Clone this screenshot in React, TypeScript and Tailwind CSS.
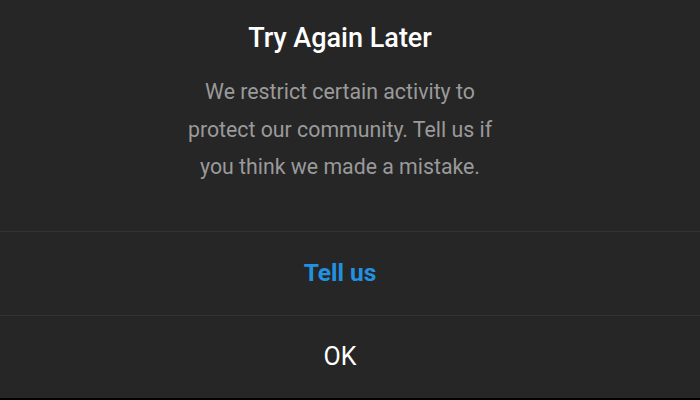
import React from 'react';

const App: React.FC = () => {
  return (
    <div className="w-[700px] h-[400px] bg-[#262626] flex flex-col overflow-hidden font-['Roboto',sans-serif]">
      <div className="h-[231px] flex flex-col items-center pt-[20px] pr-[20px]">
        <h1 className="text-[27px] leading-[36px] font-medium text-white">Try Again Later</h1>
        <p className="mt-[17px] text-[21.3px] leading-[37.5px] text-[#9a9a9a] text-center w-[330px]">
          We restrict certain activity to protect our community. Tell us if you think we made a mistake.
        </p>
      </div>
      <button className="h-[84px] pr-[20px] border-t border-[#333333] flex items-center justify-center text-[24.5px] font-bold text-[#2391e0]">
        Tell us
      </button>
      <button className="h-[83px] pr-[20px] border-t border-[#333333] flex items-center justify-center text-[25px] text-white">
        OK
      </button>
      <div className="h-[2px] bg-black" />
    </div>
  );
};

export default App;
